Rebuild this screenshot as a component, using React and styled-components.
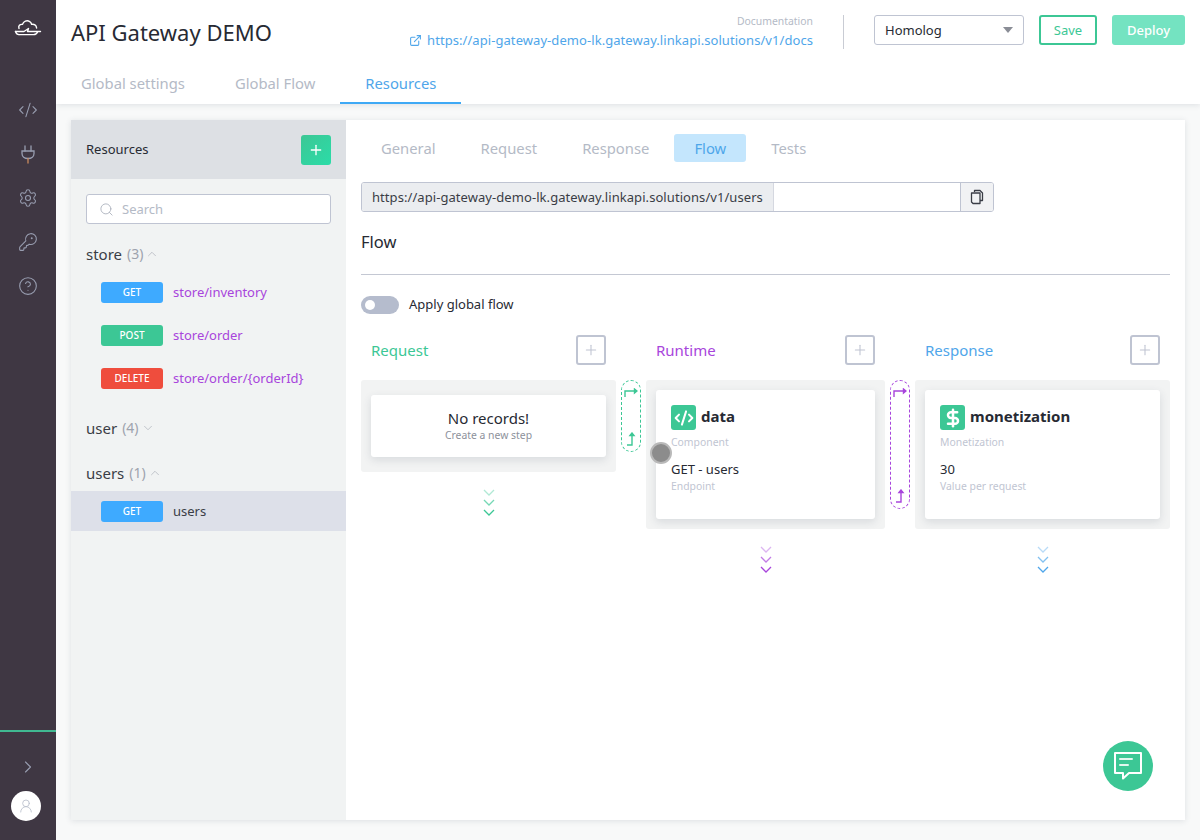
import React from "react";
import styled, { createGlobalStyle } from "styled-components";
import {
  ChevronDown,
  ChevronRight,
  ChevronUp,
  CircleHelp,
  CodeXml,
  DollarSign,
  ExternalLink,
  KeyRound,
  Plus,
  Search,
  Settings,
  UserRound,
} from "lucide-react";

const GREEN = "#3cc795";
const PURPLE = "#a845dc";
const BLUE = "#4fa6ea";

const GlobalStyle = createGlobalStyle`
  html, body { margin: 0; padding: 0; height: 100%; }
  body {
    font-family: "Noto Sans", "Open Sans", sans-serif;
    color: #272a33;
    background: #f8f9f9;
    overflow: hidden;
  }
  * { box-sizing: border-box; }
`;

const Layout = styled.div`
  display: flex;
  height: 840px;
`;

const Sidebar = styled.aside`
  width: 56px;
  flex: none;
  background: #3f3743;
  display: flex;
  flex-direction: column;
  align-items: center;
  color: #989db0;
`;

const LogoWrap = styled.div`
  height: 56px;
  display: flex;
  align-items: center;
  justify-content: center;
  color: #fff;
`;

const SideNav = styled.nav`
  margin-top: 44px;
  display: flex;
  flex-direction: column;
  gap: 24px;
  flex: 1;
`;

const SideFooter = styled.div`
  width: 100%;
  height: 110px;
  border-top: 2px solid #40b891;
  display: flex;
  flex-direction: column;
  align-items: center;
  padding-top: 25px;
  gap: 14px;
`;

const Avatar = styled.div`
  width: 30px;
  height: 30px;
  margin-right: 4px;
  border-radius: 50%;
  background: #fff;
  color: #b9bfcc;
  display: flex;
  align-items: center;
  justify-content: center;
`;

const Page = styled.div`
  flex: 1;
  min-width: 0;
  display: flex;
  flex-direction: column;
`;

const Header = styled.header`
  height: 104px;
  flex: none;
  background: #fff;
  box-shadow: 0 1px 6px rgba(60, 70, 90, 0.14);
  position: relative;
`;

const HeaderTop = styled.div`
  height: 64px;
  padding: 15px 15px 0;
  display: flex;
  align-items: flex-start;
`;

const Title = styled.h1`
  margin: 0;
  font-size: 22px;
  line-height: 34px;
  font-weight: 400;
  flex: 1;
`;

const DocBlock = styled.div`
  text-align: right;
  margin-top: -1px;
`;

const DocLabel = styled.div`
  font-size: 10.4px;
  line-height: 14px;
  color: #b4bac6;
`;

const DocLink = styled.a`
  display: flex;
  align-items: center;
  gap: 5px;
  margin-top: 3px;
  font-size: 13px;
  letter-spacing: 0.065px;
  line-height: 18px;
  color: ${BLUE};
`;

const VDivider = styled.div`
  width: 1px;
  height: 34px;
  background: #c9ccd4;
  margin: 0 30px 0 30px;
`;

const SelectBox = styled.div`
  width: 150px;
  height: 30px;
  border: 1px solid #bfc4d2;
  border-radius: 3px;
  padding: 0 10px;
  display: flex;
  align-items: center;
  justify-content: space-between;
  font-size: 13px;
`;

const Caret = styled.span`
  width: 0;
  height: 0;
  border-left: 5px solid transparent;
  border-right: 5px solid transparent;
  border-top: 6px solid #8a8d96;
`;

const OutlineButton = styled.button`
  width: 58px;
  height: 30px;
  margin-left: 15px;
  border: 2px solid ${GREEN};
  border-radius: 3px;
  background: #fff;
  color: ${GREEN};
  font: inherit;
  font-size: 13px;
`;

const SolidButton = styled.button`
  width: 73px;
  height: 30px;
  margin-left: 15px;
  border: 0;
  border-radius: 3px;
  background: #74e3c1;
  color: #fff;
  font: inherit;
  font-size: 13px;
  font-weight: 500;
`;

const PageTabs = styled.div`
  display: flex;
  height: 40px;
`;

const PageTab = styled.div`
  padding: 0 25px;
  height: 40px;
  line-height: 38px;
  font-size: 14.8px;
  color: ${(p) => (p.$active ? BLUE : "#b4bac6")};
  border-bottom: 2px solid ${(p) => (p.$active ? "#3ea9f5" : "transparent")};
`;

const Content = styled.main`
  flex: 1;
  min-height: 0;
  padding: 16px 15px 20px;
`;

const Panel = styled.div`
  height: 100%;
  display: flex;
  background: #fff;
  box-shadow: 0 1px 6px rgba(60, 70, 90, 0.14);
  position: relative;
`;

const ResourcePane = styled.section`
  width: 275px;
  flex: none;
  background: #f1f3f3;
`;

const ResourceHeader = styled.div`
  height: 59px;
  padding: 0 15px;
  background: #dde0e4;
  display: flex;
  align-items: center;
  justify-content: space-between;
  font-size: 13px;
`;

const ResourceTitle = styled.span`
  margin-top: -2px;
`;

const AddButton = styled.button`
  width: 30px;
  height: 30px;
  padding: 0;
  border: 0;
  border-radius: 3px;
  background: linear-gradient(135deg, #3cc795, #2bdca8);
  color: #fff;
  display: flex;
  align-items: center;
  justify-content: center;
`;

const SearchBox = styled.label`
  height: 30px;
  margin: 15px 15px 19px;
  padding: 0 12px;
  background: #fff;
  border: 1px solid #bfc4d2;
  border-radius: 3px;
  display: flex;
  align-items: center;
  gap: 6px;
  color: #aab0bc;
`;

const SearchInput = styled.input`
  border: 0;
  outline: 0;
  flex: 1;
  min-width: 0;
  font: inherit;
  font-size: 13px;
  background: transparent;
  &::placeholder { color: #b4bac6; opacity: 1; }
`;

const Group = styled.div`
  margin-bottom: ${(p) => (p.$open ? "19px" : "23px")};
`;

const GroupHead = styled.div`
  padding: 0 15px;
  height: 22px;
  margin-bottom: ${(p) => (p.$open ? "7px" : "0")};
  display: flex;
  align-items: center;
  font-size: 15px;
  line-height: 22px;
  color: #3a3d46;
`;

const Count = styled.span`
  margin-left: 5px;
  margin-right: 2px;
  font-size: 14px;
  color: #9ea3ae;
`;

const Rows = styled.div`
  display: flex;
  flex-direction: column;
  gap: 3px;
`;

const Row = styled.div`
  height: 40px;
  padding-left: 30px;
  display: flex;
  align-items: center;
  gap: 10px;
  font-size: 13px;
  color: ${(p) => (p.$active ? "#3a3d46" : PURPLE)};
  background: ${(p) => (p.$active ? "#dde0e9" : "transparent")};
`;

const METHOD = { GET: "#3eaaff", POST: GREEN, DELETE: "#ef4d3d" };

const Badge = styled.span`
  width: 62px;
  height: 21px;
  border-radius: 3px;
  background: ${(p) => METHOD[p.$method]};
  color: #fff;
  font-size: 10px;
  font-weight: 500;
  display: flex;
  align-items: center;
  justify-content: center;
`;

const Editor = styled.section`
  flex: 1;
  min-width: 0;
  padding: 14px 15px;
`;

const EditorTabs = styled.div`
  display: flex;
  gap: 5px;
`;

const EditorTab = styled.div`
  height: 28px;
  padding: 0 20px;
  line-height: 28px;
  font-size: 14.8px;
  border-radius: 3px;
  color: ${(p) => (p.$active ? BLUE : "#b4bac6")};
  background: ${(p) => (p.$active ? "#c4e6fd" : "transparent")};
`;

const UrlGroup = styled.div`
  width: 633px;
  height: 30px;
  margin-top: 20px;
  border: 1px solid #bfc4d2;
  border-radius: 3px;
  display: flex;
  overflow: hidden;
`;

const UrlPrefix = styled.div`
  padding: 0 10px;
  background: #ebedf0;
  border-right: 1px solid #d5d8e0;
  font-size: 13px;
  letter-spacing: 0.065px;
  line-height: 28px;
  white-space: nowrap;
  color: #3a3d46;
`;

const UrlInput = styled.input`
  flex: 1;
  min-width: 0;
  border: 0;
  outline: 0;
`;

const CopyButton = styled.button`
  width: 33px;
  padding: 0;
  border: 0;
  border-left: 1px solid #bfc4d2;
  background: #f1f2f4;
  color: #3a3d46;
  display: flex;
  align-items: center;
  justify-content: center;
`;

const SectionTitle = styled.h2`
  margin: 19px 0 0;
  font-size: 16.5px;
  line-height: 22px;
  font-weight: 400;
`;

const Rule = styled.hr`
  margin: 21px 0 0;
  border: 0;
  border-top: 1px solid #c4c8d3;
`;

const ToggleRow = styled.div`
  margin-top: 21px;
  height: 18px;
  display: flex;
  align-items: center;
  gap: 10px;
  font-size: 13px;
`;

const ToggleLabel = styled.span`
  margin-top: -2px;
`;

const Toggle = styled.div`
  width: 38px;
  height: 18px;
  padding: 4px;
  border-radius: 9px;
  background: #b5bccd;
`;

const Knob = styled.div`
  width: 10px;
  height: 10px;
  border-radius: 50%;
  background: #fff;
`;

const FlowGrid = styled.div`
  margin-top: 21px;
  display: grid;
  grid-template-columns: 255px 30px 239px 30px 255px;
  align-items: start;
`;

const FlowColumn = styled.div`
  display: flex;
  flex-direction: column;
`;

const FlowHead = styled.div`
  height: 30px;
  padding: 0 10px;
  margin-bottom: 15px;
  display: flex;
  align-items: center;
  justify-content: space-between;
  font-size: 15px;
  color: ${(p) => p.$color};
`;

const StepButton = styled.button`
  width: 30px;
  height: 30px;
  padding: 0;
  border: 2px solid #bfc4d2;
  border-radius: 3px;
  background: #fff;
  color: #bfc4d2;
  display: flex;
  align-items: center;
  justify-content: center;
`;

const Stage = styled.div`
  padding: ${(p) => (p.$empty ? "15px 10px" : "10px")};
  background: #f2f3f3;
  border-radius: 3px;
`;

const Card = styled.div`
  position: relative;
  height: ${(p) => (p.$empty ? "62px" : "129px")};
  padding: ${(p) => (p.$empty ? "12px 0 0" : "15px")};
  background: #fff;
  border-radius: 3px;
  box-shadow: 0 3px 8px rgba(60, 70, 90, 0.14);
  text-align: ${(p) => (p.$empty ? "center" : "left")};
`;

const EmptyTitle = styled.div`
  font-size: 15px;
  line-height: 22px;
`;

const EmptyHint = styled.div`
  font-size: 10.4px;
  line-height: 13px;
  color: #8d919b;
`;

const CardTitle = styled.div`
  display: flex;
  align-items: center;
  gap: 5px;
  font-size: 15px;
  font-weight: 700;
`;

const CardName = styled.span`
  margin-top: -4px;
`;

const IconTile = styled.div`
  width: 25px;
  height: 25px;
  border-radius: 3px;
  background: ${GREEN};
  color: #fff;
  display: flex;
  align-items: center;
  justify-content: center;
`;

const SmallLabel = styled.div`
  margin-top: ${(p) => p.$top || 0}px;
  font-size: 10.4px;
  line-height: 14px;
  color: #bfc5d2;
`;

const CardValue = styled.div`
  margin-top: 11px;
  margin-bottom: 1px;
  font-size: 13px;
  line-height: 18px;
`;

const CursorDot = styled.div`
  position: absolute;
  left: -6px;
  top: 52px;
  width: 22px;
  height: 22px;
  border-radius: 50%;
  background: #8c8c8c;
  border: 2px solid #b9b9b9;
`;

const ChevronStack = styled.div`
  margin-top: 17px;
  display: flex;
  justify-content: center;
  color: ${(p) => p.$color};
`;

const Connector = styled.div`
  margin: 45px 5px 0;
  height: ${(p) => p.$height}px;
  border: 1px dashed ${(p) => p.$color};
  border-radius: 10px;
  color: ${(p) => p.$color};
  display: flex;
  flex-direction: column;
  justify-content: space-between;
  align-items: center;
  padding: 7px 0 5px;
`;

const ChatBubble = styled.button`
  position: absolute;
  right: 32px;
  bottom: 29px;
  width: 50px;
  height: 50px;
  padding: 0;
  border: 0;
  border-radius: 50%;
  background: ${GREEN};
  display: flex;
  align-items: center;
  justify-content: center;
`;

const Logo = () => (
  <svg width="28" height="18" viewBox="0 0 28 18" fill="none" stroke="currentColor" strokeWidth="1.4" strokeLinejoin="round" strokeLinecap="round">
    <path d="M5 9.5C4 6.8 6 5 8.4 5.4 9.6 2.4 12.8 .8 15.4 2.4c1.2.7 2 1.8 2.2 3 2.4-.6 4.8.8 5 3.6" />
    <path d="M1.5 12.5h8.5l4.5-3-1 3h13" />
    <path d="M5 15.6h14.500c2 0 3.400-.8 4-2.600" />
    <path d="M1.5 12.5c.6 2 1.800 3.100 3.500 3.100" />
  </svg>
);

const PlugIcon = () => (
  <svg width="20" height="20" viewBox="0 0 20 20" fill="none" stroke="currentColor" strokeWidth="1.3" strokeLinecap="round">
    <path d="M7 2v5M13 2v5" />
    <path d="M4 7h12v2.500c0 3-2.500 5-6 5s-6-2-6-5V7z" />
    <path d="M10 14.500V19" stroke="#c98a5e" />
  </svg>
);

const CopyIcon = () => (
  <svg width="14" height="16" viewBox="0 0 14 16" fill="none" stroke="currentColor" strokeWidth="1.3" strokeLinejoin="round">
    <path d="M4.500 3V1.500h5.500l2.500 2.500v7.500H10" />
    <path d="M1.500 4h8.500v10.500H3L1.500 13z" />
  </svg>
);

const ChatIcon = () => (
  <svg width="30" height="30" viewBox="0 0 30 30" fill="none" stroke="#fff" strokeWidth="2" strokeLinejoin="round" strokeLinecap="round">
    <path d="M2 2h26v20H16l-6 5.500V22H2z" />
    <path d="M7 8h12M7 14h8" strokeOpacity="0.85" />
  </svg>
);

const ArrowRightHook = () => (
  <svg width="14" height="10" viewBox="0 0 14 10" fill="none" stroke="currentColor" strokeWidth="1.4">
    <path d="M1 9V3h10" />
    <path d="M10.500 1l2.500 2-2.500 2z" fill="currentColor" />
  </svg>
);

const ArrowUpHook = () => (
  <svg width="10" height="14" viewBox="0 0 10 14" fill="none" stroke="currentColor" strokeWidth="1.4">
    <path d="M1 13h5V3" />
    <path d="M4 3.500L6 1l2 2.500z" fill="currentColor" />
  </svg>
);

const TripleChevron = () => (
  <svg width="12" height="28" viewBox="0 0 12 28" fill="none" stroke="currentColor" strokeWidth="1.3">
    <path d="M1 1l5 5 5-5" opacity="0.4" />
    <path d="M1 11l5 5 5-5" opacity="0.7" />
    <path d="M1 21l5 5 5-5" />
  </svg>
);

const groups = [
  {
    name: "store",
    count: 3,
    open: true,
    rows: [
      { method: "GET", path: "store/inventory" },
      { method: "POST", path: "store/order" },
      { method: "DELETE", path: "store/order/{orderId}" },
    ],
  },
  { name: "user", count: 4, open: false, rows: [] },
  { name: "users", count: 1, open: true, rows: [{ method: "GET", path: "users", active: true }] },
];

const Link = ({ color, height }) => (
  <Connector $color={color} $height={height}>
    <ArrowRightHook />
    <ArrowUpHook />
  </Connector>
);

const App = () => {
  return (
    <Layout>
      <GlobalStyle />
      <Sidebar>
        <LogoWrap>
          <Logo />
        </LogoWrap>
        <SideNav>
          <CodeXml size={20} strokeWidth={1.3} />
          <PlugIcon />
          <Settings size={20} strokeWidth={1.3} />
          <KeyRound size={20} strokeWidth={1.3} />
          <CircleHelp size={20} strokeWidth={1.3} />
        </SideNav>
        <SideFooter>
          <ChevronRight size={20} strokeWidth={1.3} />
          <Avatar>
            <UserRound size={16} strokeWidth={1.3} />
          </Avatar>
        </SideFooter>
      </Sidebar>

      <Page>
        <Header>
          <HeaderTop>
            <Title>API Gateway DEMO</Title>
            <DocBlock>
              <DocLabel>Documentation</DocLabel>
              <DocLink>
                <ExternalLink size={13} />
                https://api-gateway-demo-lk.gateway.linkapi.solutions/v1/docs
              </DocLink>
            </DocBlock>
            <VDivider />
            <SelectBox>
              Homolog
              <Caret />
            </SelectBox>
            <OutlineButton>Save</OutlineButton>
            <SolidButton>Deploy</SolidButton>
          </HeaderTop>
          <PageTabs>
            <PageTab>Global settings</PageTab>
            <PageTab>Global Flow</PageTab>
            <PageTab $active>Resources</PageTab>
          </PageTabs>
        </Header>

        <Content>
          <Panel>
            <ResourcePane>
              <ResourceHeader>
                <ResourceTitle>Resources</ResourceTitle>
                <AddButton>
                  <Plus size={16} strokeWidth={2} />
                </AddButton>
              </ResourceHeader>
              <SearchBox>
                <Search size={15} strokeWidth={1.4} />
                <SearchInput placeholder="Search" />
              </SearchBox>
              {groups.map((g) => (
                <Group key={g.name} $open={g.rows.length > 0}>
                  <GroupHead $open={g.rows.length > 0}>
                    {g.name}
                    <Count>({g.count})</Count>
                    {g.open ? (
                      <ChevronUp size={14} strokeWidth={1} color="#9ea3ae" />
                    ) : (
                      <ChevronDown size={14} strokeWidth={1} color="#9ea3ae" />
                    )}
                  </GroupHead>
                  <Rows>
                    {g.rows.map((r) => (
                      <Row key={r.path} $active={r.active}>
                        <Badge $method={r.method}>{r.method}</Badge>
                        {r.path}
                      </Row>
                    ))}
                  </Rows>
                </Group>
              ))}
            </ResourcePane>

            <Editor>
              <EditorTabs>
                <EditorTab>General</EditorTab>
                <EditorTab>Request</EditorTab>
                <EditorTab>Response</EditorTab>
                <EditorTab $active>Flow</EditorTab>
                <EditorTab>Tests</EditorTab>
              </EditorTabs>
              <UrlGroup>
                <UrlPrefix>https://api-gateway-demo-lk.gateway.linkapi.solutions/v1/users</UrlPrefix>
                <UrlInput />
                <CopyButton>
                  <CopyIcon />
                </CopyButton>
              </UrlGroup>
              <SectionTitle>Flow</SectionTitle>
              <Rule />
              <ToggleRow>
                <Toggle>
                  <Knob />
                </Toggle>
                <ToggleLabel>Apply global flow</ToggleLabel>
              </ToggleRow>

              <FlowGrid>
                <FlowColumn>
                  <FlowHead $color={GREEN}>
                    Request
                    <StepButton>
                      <Plus size={16} strokeWidth={1.6} />
                    </StepButton>
                  </FlowHead>
                  <Stage $empty>
                    <Card $empty>
                      <EmptyTitle>No records!</EmptyTitle>
                      <EmptyHint>Create a new step</EmptyHint>
                    </Card>
                  </Stage>
                  <ChevronStack $color={GREEN}>
                    <TripleChevron />
                  </ChevronStack>
                </FlowColumn>

                <Link color={GREEN} height={72} />

                <FlowColumn>
                  <FlowHead $color={PURPLE}>
                    Runtime
                    <StepButton>
                      <Plus size={16} strokeWidth={1.6} />
                    </StepButton>
                  </FlowHead>
                  <Stage>
                    <Card>
                      <CardTitle>
                        <IconTile>
                          <CodeXml size={20} strokeWidth={2.4} />
                        </IconTile>
                        <CardName>data</CardName>
                      </CardTitle>
                      <SmallLabel $top={5}>Component</SmallLabel>
                      <CardValue>GET - users</CardValue>
                      <SmallLabel>Endpoint</SmallLabel>
                      <CursorDot />
                    </Card>
                  </Stage>
                  <ChevronStack $color={PURPLE}>
                    <TripleChevron />
                  </ChevronStack>
                </FlowColumn>

                <Link color={PURPLE} height={129} />

                <FlowColumn>
                  <FlowHead $color={BLUE}>
                    Response
                    <StepButton>
                      <Plus size={16} strokeWidth={1.6} />
                    </StepButton>
                  </FlowHead>
                  <Stage>
                    <Card>
                      <CardTitle>
                        <IconTile>
                          <DollarSign size={20} strokeWidth={3} />
                        </IconTile>
                        <CardName>monetization</CardName>
                      </CardTitle>
                      <SmallLabel $top={5}>Monetization</SmallLabel>
                      <CardValue>30</CardValue>
                      <SmallLabel>Value per request</SmallLabel>
                    </Card>
                  </Stage>
                  <ChevronStack $color={BLUE}>
                    <TripleChevron />
                  </ChevronStack>
                </FlowColumn>
              </FlowGrid>
            </Editor>

            <ChatBubble>
              <ChatIcon />
            </ChatBubble>
          </Panel>
        </Content>
      </Page>
    </Layout>
  );
};

export default App;
